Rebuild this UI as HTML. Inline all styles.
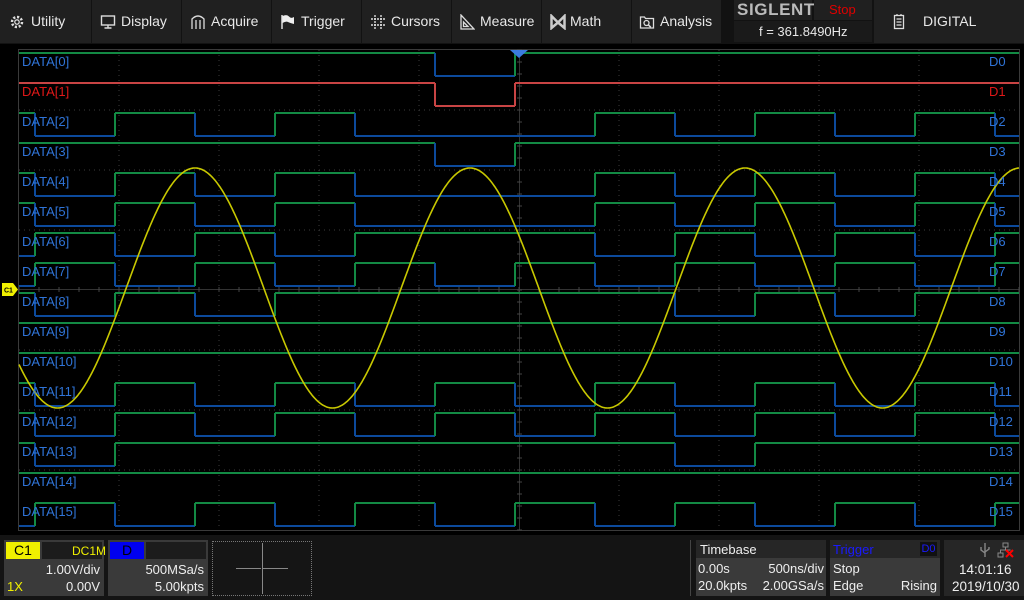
<!DOCTYPE html>
<html><head><meta charset="utf-8"><style>
*{margin:0;padding:0;box-sizing:border-box}
body{width:1024px;height:600px;background:#000;overflow:hidden;position:relative;font-family:"Liberation Sans",sans-serif;color:#e6e6e6}
.top{position:absolute;left:0;top:0;width:1024px;height:44px;background:#121212}
.m{position:absolute;top:0;height:43px;background:#202020;font-size:14px;line-height:43px;color:#e8e8e8}
.m svg{position:absolute;top:14px}
.m span{position:absolute;top:0}
.bot{position:absolute;left:0;top:535px;width:1024px;height:65px;background:#141414}
.bx{position:absolute;background:#3a3a3a;font-size:13px;color:#eee}
.t{position:absolute;white-space:nowrap}
.lab{position:absolute;font-size:13px;color:#2f74d8;white-space:nowrap}
</style></head><body>
<div class="top">
<div class="m" style="left:0;width:91px"><svg width="16" height="16" viewBox="0 0 16 16" style="left:9px"><circle cx="8" cy="8" r="5" fill="none" stroke="#ddd" stroke-width="2.5" stroke-dasharray="2.2 1.7"/><circle cx="8" cy="8" r="2.2" fill="none" stroke="#ddd" stroke-width="1.3"/></svg><span style="left:31px">Utility</span></div>
<div class="m" style="left:92px;width:89px"><svg width="16" height="16" viewBox="0 0 16 16" style="left:8px"><rect x="1.5" y="2" width="13" height="9" fill="none" stroke="#ddd" stroke-width="1.4"/><path d="M8 11v3M4.5 14h7" stroke="#ddd" stroke-width="1.4"/></svg><span style="left:29px">Display</span></div>
<div class="m" style="left:182px;width:89px"><svg width="16" height="16" viewBox="0 0 16 16" style="left:8px"><path d="M2 15V5Q8-1 14 5v10M6 15V6M10 15V6" fill="none" stroke="#ddd" stroke-width="1.3"/></svg><span style="left:29px">Acquire</span></div>
<div class="m" style="left:272px;width:89px"><svg width="16" height="16" viewBox="0 0 16 16" style="left:8px"><path d="M2 1v14" stroke="#ddd" stroke-width="1.5"/><path d="M2.5 2Q7 0 9 2.5T14 3v7Q10 9 8 8T2.5 9z" fill="#eee"/></svg><span style="left:29px">Trigger</span></div>
<div class="m" style="left:362px;width:89px"><svg width="16" height="16" viewBox="0 0 16 16" style="left:8px"><path d="M5 1v14M11 1v14M1 5h14M1 11h14" stroke="#ddd" stroke-width="1.4" stroke-dasharray="2 1"/></svg><span style="left:29px">Cursors</span></div>
<div class="m" style="left:452px;width:89px"><svg width="16" height="16" viewBox="0 0 16 16" style="left:7px"><path d="M2 1v14h13zM4.5 8v4.5H9z" fill="none" stroke="#ddd" stroke-width="1.3"/></svg><span style="left:28px">Measure</span></div>
<div class="m" style="left:542px;width:89px"><svg width="16" height="16" viewBox="0 0 16 16" style="left:8px"><path d="M1.5 2l6.5 6.5L14.5 2v12L8 8.5 1.5 14z" fill="none" stroke="#ccc" stroke-width="2.5"/></svg><span style="left:28px">Math</span></div>
<div class="m" style="left:632px;width:89px"><svg width="16" height="16" viewBox="0 0 16 16" style="left:7px"><path d="M1.5 3h4l1 1.5h8V14h-13z" fill="none" stroke="#ddd" stroke-width="1.3"/><circle cx="7.5" cy="9" r="2.5" fill="none" stroke="#ddd" stroke-width="1.3"/><path d="M9.3 10.8l2.5 2.5" stroke="#ddd" stroke-width="1.5"/></svg><span style="left:28px">Analysis</span></div>
<div class="m" style="left:734px;width:78px;height:20px;line-height:20px;background:#202020"><span style="left:3px;font-weight:bold;font-size:17px;color:#bbb;letter-spacing:0.6px">SIGLENT</span></div>
<div class="m" style="left:814px;width:58px;height:20px;line-height:20px;background:#202020"><span style="left:15px;color:#e00000;font-size:13px">Stop</span></div>
<div class="m" style="left:734px;top:21px;width:138px;height:21px;line-height:21px;background:#1a1a1a"><span style="left:25px;font-size:13px">f = 361.8490Hz</span></div>
<div class="m" style="left:874px;width:150px"><svg width="12" height="16" viewBox="0 0 12 16" style="left:19px"><rect x="1.5" y="1.5" width="9" height="13" fill="none" stroke="#ddd" stroke-width="1.3"/><path d="M3.5 5h5M3.5 8h5M3.5 11h5M4 0v2M8 0v2" stroke="#ddd" stroke-width="1.2"/></svg><span style="left:49px">DIGITAL</span></div>
</div>

<svg style="position:absolute;left:0;top:0" width="1024" height="535" id="scope">
<rect x="18.5" y="49.5" width="1001" height="481" fill="none" stroke="#3a3a3a"/>
<g stroke="#3c3c3c" stroke-dasharray="1 4">
<path d="M119 50v480M219 50v480M319 50v480M419 50v480M619 50v480M719 50v480M819 50v480M919 50v480"/>
<path d="M19 110h1000M19 170h1000M19 230h1000M19 350h1000M19 410h1000M19 470h1000"/>
</g>
<path d="M19 289.5h1000M519.5 50v480" stroke="#333" stroke-width="1"/>
<g id="ticks" stroke="#444"></g>
<g id="dig" fill="none" stroke-width="2"></g>
<path id="sine" fill="none" stroke="#c8c800" stroke-width="1.6"/>
<path d="M510 50h18l-9 8z" fill="#3b7be0"/>
<path d="M2 283h11l5 6.5-5 6.5H2z" fill="#f0f000"/>
<text x="4" y="292.5" font-size="7" font-weight="bold" fill="#000" font-family="Liberation Sans">C1</text>
</svg>

<div class="lab" style="left:22px;top:54px">DATA[0]</div>
<div class="lab" style="left:22px;top:84px;color:#e01818">DATA[1]</div>
<div class="lab" style="left:22px;top:114px">DATA[2]</div>
<div class="lab" style="left:22px;top:144px">DATA[3]</div>
<div class="lab" style="left:22px;top:174px">DATA[4]</div>
<div class="lab" style="left:22px;top:204px">DATA[5]</div>
<div class="lab" style="left:22px;top:234px">DATA[6]</div>
<div class="lab" style="left:22px;top:264px">DATA[7]</div>
<div class="lab" style="left:22px;top:294px">DATA[8]</div>
<div class="lab" style="left:22px;top:324px">DATA[9]</div>
<div class="lab" style="left:22px;top:354px">DATA[10]</div>
<div class="lab" style="left:22px;top:384px">DATA[11]</div>
<div class="lab" style="left:22px;top:414px">DATA[12]</div>
<div class="lab" style="left:22px;top:444px">DATA[13]</div>
<div class="lab" style="left:22px;top:474px">DATA[14]</div>
<div class="lab" style="left:22px;top:504px">DATA[15]</div>
<div class="lab" style="left:989px;top:54px">D0</div>
<div class="lab" style="left:989px;top:84px;color:#e01818">D1</div>
<div class="lab" style="left:989px;top:114px">D2</div>
<div class="lab" style="left:989px;top:144px">D3</div>
<div class="lab" style="left:989px;top:174px">D4</div>
<div class="lab" style="left:989px;top:204px">D5</div>
<div class="lab" style="left:989px;top:234px">D6</div>
<div class="lab" style="left:989px;top:264px">D7</div>
<div class="lab" style="left:989px;top:294px">D8</div>
<div class="lab" style="left:989px;top:324px">D9</div>
<div class="lab" style="left:989px;top:354px">D10</div>
<div class="lab" style="left:989px;top:384px">D11</div>
<div class="lab" style="left:989px;top:414px">D12</div>
<div class="lab" style="left:989px;top:444px">D13</div>
<div class="lab" style="left:989px;top:474px">D14</div>
<div class="lab" style="left:989px;top:504px">D15</div>

<div class="bot">
<div class="bx" style="left:4px;top:5px;width:100px;height:56px">
<div class="t" style="left:2px;top:2px;width:34px;height:17px;background:#f0f000;color:#000;text-align:center;line-height:17px;font-size:14px">C1</div>
<div class="t" style="left:38px;top:2px;width:60px;height:17px;background:#1c1c1c"></div>
<div class="t" style="left:68px;top:4px;color:#f0f000;font-size:12px">DC1M</div>
<div class="t" style="right:4px;top:22px">1.00V/div</div>
<div class="t" style="left:3px;top:39px;color:#f0f000">1X</div>
<div class="t" style="right:4px;top:39px">0.00V</div>
</div>
<div class="bx" style="left:108px;top:5px;width:100px;height:56px">
<div class="t" style="left:2px;top:2px;width:34px;height:17px;background:#0000f0;color:#000;text-align:center;line-height:17px;font-size:14px">D</div>
<div class="t" style="left:38px;top:2px;width:60px;height:17px;background:#1c1c1c"></div>
<div class="t" style="right:4px;top:22px">500MSa/s</div>
<div class="t" style="right:4px;top:39px">5.00kpts</div>
</div>
<div class="t" style="left:212px;top:6px;width:100px;height:55px;border:1px dotted #777;background:#151515"></div>
<div class="t" style="left:236px;top:33px;width:52px;height:1px;background:#888"></div>
<div class="t" style="left:262px;top:8px;width:1px;height:51px;background:#888"></div>
<div class="t" style="left:261px;top:20px;width:1px;height:26px;background:#151515"></div>
<div class="t" style="left:690px;top:5px;width:1px;height:56px;background:#444"></div>
<div class="bx" style="left:696px;top:5px;width:130px;height:56px">
<div class="t" style="left:0;top:0;width:130px;height:18px;background:#262626"></div>
<div class="t" style="left:4px;top:2px">Timebase</div>
<div class="t" style="left:2px;top:21px">0.00s</div>
<div class="t" style="right:2px;top:21px">500ns/div</div>
<div class="t" style="left:2px;top:38px">20.0kpts</div>
<div class="t" style="right:2px;top:38px">2.00GSa/s</div>
</div>
<div class="bx" style="left:830px;top:5px;width:110px;height:56px">
<div class="t" style="left:0;top:0;width:110px;height:18px;background:#262626"></div>
<div class="t" style="left:3px;top:2px;color:#1a1aff">Trigger</div>
<div class="t" style="left:90px;top:2px;width:17px;height:14px;background:#111;color:#1a1aff;font-size:11px;text-align:center;line-height:14px">D0</div>
<div class="t" style="left:3px;top:21px">Stop</div>
<div class="t" style="left:3px;top:38px">Edge</div>
<div class="t" style="right:3px;top:38px">Rising</div>
</div>
<div class="bx" style="left:944px;top:5px;width:80px;height:56px;background:#262626">
<svg class="t" style="left:34px;top:2px" width="14" height="16" viewBox="0 0 14 16"><path d="M7 1v14M3 5v3l4 3M11 5v2l-4 3" fill="none" stroke="#888" stroke-width="1.4"/></svg>
<svg class="t" style="left:53px;top:2px" width="18" height="17" viewBox="0 0 18 17"><rect x="6" y="1" width="5" height="4" fill="none" stroke="#888"/><rect x="1" y="11" width="5" height="4" fill="none" stroke="#888"/><path d="M8.5 5v3H3.5v3M8.5 8h5" stroke="#888" fill="none"/><path d="M9 8l7 7M16 8l-7 7" stroke="#f00" stroke-width="2"/></svg>
<div class="t" style="left:15px;top:22px;font-size:13.5px">14:01:16</div>
<div class="t" style="left:8px;top:39px;font-size:13.5px">2019/10/30</div>
</div>
</div>

<script>
(function(){
var NS="http://www.w3.org/2000/svg";
var E=[19,35,115,195,275,355,435,515,595,675,755,835,915,995,1019];
var rows=[
"HHHHHHLHHHHHHH","HHHHHHLHHHHHHH","HLHLHLLLHLHLHL","HHHHHHLHHHHHHH",
"HLHLHLLLHLHLHL","HLHLHLLLHLHLHL","LHLHLHHHLHLHLH","LHLHLHLHLHLHLH",
"HLHLHHHHHLHLHH","HHHHHHHHHHHHHH","HHHHHHHHHHHHHH","HLHLHLHLHLHLHL",
"HLHLHLHLHLHLHL","HLHHHHHHHLHHHH","HHHHHHHHHHHHHH","LHLHLHLHLHLHLH"];
var g=document.getElementById("dig");
function line(d,c){var p=document.createElementNS(NS,"path");p.setAttribute("d",d);p.setAttribute("stroke",c);g.appendChild(p);}
rows.forEach(function(r,i){
 var hy=53+30*i, ly=76+30*i;
 var hc=i==1?"#c84444":"#138a44", lc=i==1?"#c84444":"#0c4a9c";
 for(var s=0;s<14;s++){
  var lv=r[s], y=lv=="H"?hy:ly, c=lv=="H"?hc:lc;
  line("M"+E[s]+" "+y+"H"+E[s+1],c);
  if(s>0&&r[s-1]!=lv){line("M"+E[s]+" "+hy+"V"+ly,c);}
 }
});
var d="";
for(var x=19;x<=1019;x++){var y=288-120*Math.cos(2*Math.PI*(x-195)/275);d+=(x==19?"M":"L")+x+" "+y.toFixed(1);}
document.getElementById("sine").setAttribute("d",d);
var t=document.getElementById("ticks"),td="";
for(var x=19;x<=1019;x+=20)td+="M"+x+" 287V292";
for(var y=50;y<=530;y+=12)td+="M517 "+y+"H522";
var p=document.createElementNS(NS,"path");p.setAttribute("d",td);t.appendChild(p);
})();
</script>
</body></html>
